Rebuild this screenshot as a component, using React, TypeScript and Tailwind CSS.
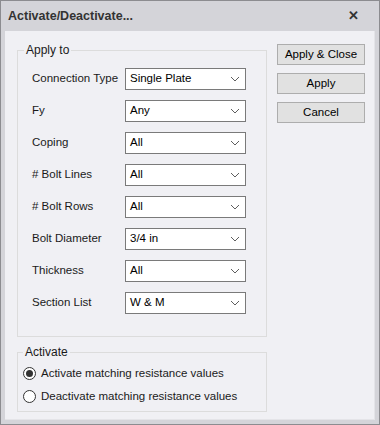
import React from 'react';

const rows = [
  { label: 'Connection Type', value: 'Single Plate' },
  { label: 'Fy', value: 'Any' },
  { label: 'Coping', value: 'All' },
  { label: '# Bolt Lines', value: 'All' },
  { label: '# Bolt Rows', value: 'All' },
  { label: 'Bolt Diameter', value: '3/4 in' },
  { label: 'Thickness', value: 'All' },
  { label: 'Section List', value: 'W & M' },
];

function Chevron() {
  return (
    <svg width="10" height="6" viewBox="0 0 10 6" className="shrink-0">
      <path d="M1 1 L5 5 L9 1" fill="none" stroke="#5f5f5f" strokeWidth="1" />
    </svg>
  );
}

function Select({ value }: { value: string }) {
  return (
    <div className="w-[121px] h-[22px] bg-white border border-[#7a7a7a] flex items-center pl-[4px] pr-[5px] text-[#000]">
      <span className="flex-1">{value}</span>
      <Chevron />
    </div>
  );
}

function Radio({ checked, label }: { checked?: boolean; label: string }) {
  return (
    <div className="flex items-center h-[23px]">
      <div className="w-[13px] h-[13px] rounded-full border border-[#333] bg-white flex items-center justify-center ml-[5px] mr-[5px]">
        {checked && <div className="w-[7px] h-[7px] rounded-full bg-[#333]" />}
      </div>
      <span>{label}</span>
    </div>
  );
}

function DlgButton({ children }: { children: React.ReactNode }) {
  return (
    <button className="w-[88px] h-[21px] bg-[#e1e1e1] border border-[#adadad] text-[#000] flex items-center justify-center">
      {children}
    </button>
  );
}

export default function App() {
  return (
    <div
      className="w-[380px] h-[425px] bg-[#d4d4d9] border border-[#8c8c90] flex flex-col text-[11.5px] text-[#1a1a1a]"
      style={{ fontFamily: '"Liberation Sans", Arial, sans-serif' }}
    >
      {/* Title bar */}
      <div className="h-[30px] flex items-center justify-between pl-[7px] pr-[20px]">
        <span className="font-bold text-[12.5px] text-[#333]">Activate/Deactivate...</span>
        <span className="font-bold text-[13px] text-[#333]">✕</span>
      </div>

      {/* Content */}
      <div className="flex-1 mx-[4px] mb-[4px] bg-[#f0f0f4] border-b border-r border-[#e4e4e8] flex items-start pl-[12px] pt-[11px] gap-[10px]">
        <div className="flex flex-col">
          <fieldset className="w-[250px] border border-[#dcdcdc] pl-[14px] pr-[20px] pt-[10px] pb-[22px]">
            <legend className="ml-[-8px] px-[2px] leading-[16px] text-[12px]">Apply to</legend>
            <div className="flex flex-col gap-[10px]">
              {rows.map((r) => (
                <div key={r.label} className="flex items-center h-[22px]">
                  <span className="w-[93px]">{r.label}</span>
                  <Select value={r.value} />
                </div>
              ))}
            </div>
          </fieldset>

          <fieldset className="w-[250px] mt-[7px] border border-[#dcdcdc] pt-[2px] pb-[3px]">
            <legend className="ml-[5px] px-[2px] leading-[16px] text-[12px]">Activate</legend>
            <Radio checked label="Activate matching resistance values" />
            <Radio label="Deactivate matching resistance values" />
          </fieldset>
        </div>

        <div className="flex flex-col gap-[8px] mt-[2px]">
          <DlgButton>Apply &amp; Close</DlgButton>
          <DlgButton>Apply</DlgButton>
          <DlgButton>Cancel</DlgButton>
        </div>
      </div>
    </div>
  );
}
